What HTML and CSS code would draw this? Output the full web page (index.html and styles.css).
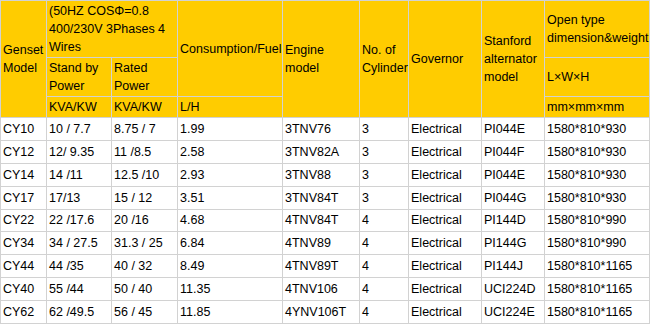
FILE: index.html
```html
<!DOCTYPE html>
<html>
<head>
<meta charset="utf-8">
<link rel="stylesheet" href="styles.css">
</head>
<body>
<table class="spec">
  <colgroup>
    <col class="c1"><col class="c2"><col class="c3"><col class="c4"><col class="c5"><col class="c6"><col class="c7"><col class="c8"><col class="c9">
  </colgroup>
  <thead>
    <tr class="h1">
      <th rowspan="3">Genset Model</th>
      <th colspan="2">(50HZ COSΦ=0.8 400/230V 3Phases 4 Wires</th>
      <th rowspan="2">Consumption/Fuel</th>
      <th rowspan="3">Engine model</th>
      <th rowspan="3">No. of Cylinder</th>
      <th rowspan="3">Governor</th>
      <th rowspan="3">Stanford alternator model</th>
      <th>Open type dimension&amp;weight</th>
    </tr>
    <tr class="h2">
      <th>Stand by Power</th>
      <th>Rated Power</th>
      <th>L×W×H</th>
    </tr>
    <tr class="h3">
      <th>KVA/KW</th>
      <th>KVA/KW</th>
      <th>L/H</th>
      <th>mm×mm×mm</th>
    </tr>
  </thead>
  <tbody>
    <tr><td>CY10</td><td>10 / 7.7</td><td>8.75 / 7</td><td>1.99</td><td>3TNV76</td><td>3</td><td>Electrical</td><td>PI044E</td><td>1580*810*930</td></tr>
    <tr><td>CY12</td><td>12/ 9.35</td><td>11 /8.5</td><td>2.58</td><td>3TNV82A</td><td>3</td><td>Electrical</td><td>PI044F</td><td>1580*810*930</td></tr>
    <tr><td>CY14</td><td>14 /11</td><td>12.5 /10</td><td>2.93</td><td>3TNV88</td><td>3</td><td>Electrical</td><td>PI044E</td><td>1580*810*930</td></tr>
    <tr><td>CY17</td><td>17/13</td><td>15 / 12</td><td>3.51</td><td>3TNV84T</td><td>3</td><td>Electrical</td><td>PI044G</td><td>1580*810*930</td></tr>
    <tr><td>CY22</td><td>22 /17.6</td><td>20 /16</td><td>4.68</td><td>4TNV84T</td><td>4</td><td>Electrical</td><td>PI144D</td><td>1580*810*990</td></tr>
    <tr><td>CY34</td><td>34 / 27.5</td><td>31.3 / 25</td><td>6.84</td><td>4TNV89</td><td>4</td><td>Electrical</td><td>PI144G</td><td>1580*810*990</td></tr>
    <tr><td>CY44</td><td>44 /35</td><td>40 / 32</td><td>8.49</td><td>4TNV89T</td><td>4</td><td>Electrical</td><td>PI144J</td><td>1580*810*1165</td></tr>
    <tr><td>CY40</td><td>55 /44</td><td>50 / 40</td><td>11.35</td><td>4TNV106</td><td>4</td><td>Electrical</td><td>UCI224D</td><td>1580*810*1165</td></tr>
    <tr><td>CY62</td><td>62 /49.5</td><td>56 / 45</td><td>11.85</td><td>4YNV106T</td><td>4</td><td>Electrical</td><td>UCI224E</td><td>1580*810*1165</td></tr>
  </tbody>
</table>
</body>
</html>
```
FILE: styles.css
```css
html, body {
  margin: 0;
  padding: 0;
  background: #ffffff;
}

.spec {
  width: 650px;
  table-layout: fixed;
  border-collapse: separate;
  border-spacing: 0;
  border-left: 1px solid #d2d2d2;
  border-top: 1px solid #d2d2d2;
  font-family: "Liberation Sans", Arial, sans-serif;
  font-size: 12.5px;
  color: #000;
}

.c1 { width: 46px; }
.c2 { width: 65px; }
.c3 { width: 66px; }
.c4 { width: 105px; }
.c5 { width: 77px; }
.c6 { width: 49px; }
.c7 { width: 73px; }
.c8 { width: 63px; }
.c9 { width: 105px; }

.spec th,
.spec td {
  border-right: 1px solid #d2d2d2;
  border-bottom: 1px solid #d2d2d2;
  padding: 0 0 0 2px;
  text-align: left;
  vertical-align: middle;
  font-weight: normal;
  line-height: 18px;
  overflow: visible;
}

.spec th {
  background: #ffcc00;
}

.h1 { height: 57px; }
.h2 { height: 39px; }
.h3 { height: 21px; }

.spec tbody tr {
  height: 22.89px;
}

.spec td {
  white-space: nowrap;
}
```
